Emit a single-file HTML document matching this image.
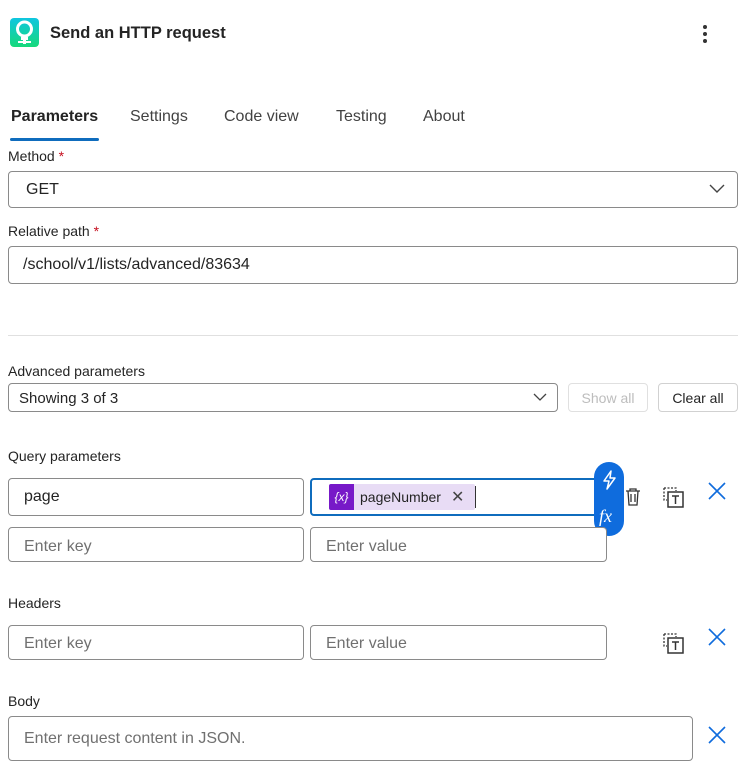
<!DOCTYPE html>
<html><head><style>
*{box-sizing:border-box;margin:0;padding:0}
body{width:745px;height:751px;overflow:hidden;background:#fff;font-family:"Liberation Sans",sans-serif;color:#242424;position:relative}
.a{position:absolute}
.lbl{font-size:14px;color:#242424}
.req{color:#c50f1f}
.box{position:absolute;border:1px solid #8a8a8a;border-radius:4px;background:#fff;font-size:16px;padding-left:15px;display:flex;align-items:center}
.ph{color:#707070}
.tab{position:absolute;top:108px;font-size:16px;color:#424242}
.btn{position:absolute;border:1px solid #d1d1d1;border-radius:4px;font-size:14px;display:flex;align-items:center;justify-content:center}
</style></head><body>
<div class="a" style="left:10px;top:18px;width:29px;height:29px;border-radius:4px;background:linear-gradient(#0fc6e0,#16d97a)">
<svg width="29" height="29" viewBox="0 0 29 29"><circle cx="14.5" cy="11" r="7" fill="none" stroke="#fff" stroke-width="3"/><rect x="11" y="19" width="7" height="3" fill="#fff"/><rect x="13" y="18" width="3" height="8" fill="#fff"/><rect x="8" y="23" width="13" height="2" fill="#fff"/></svg></div>
<div class="a" style="left:50px;top:24px;font-size:16.5px;font-weight:bold;color:#242424">Send an HTTP request</div>
<div class="a" style="left:703px;top:25px;width:4px;font-size:0">
<div style="width:4px;height:4px;border-radius:2px;background:#333;margin-bottom:3px"></div><div style="width:4px;height:4px;border-radius:2px;background:#333;margin-bottom:3px"></div><div style="width:4px;height:4px;border-radius:2px;background:#333"></div></div>
<div class="tab" style="left:11px;color:#242424;font-weight:bold">Parameters</div>
<div class="a" style="left:10px;top:138px;width:89px;height:3px;border-radius:2px;background:#0f6cbd"></div>
<div class="tab" style="left:130px">Settings</div>
<div class="tab" style="left:224px">Code view</div>
<div class="tab" style="left:336px">Testing</div>
<div class="tab" style="left:423px">About</div>
<div class="a lbl" style="left:8px;top:148px">Method <span class="req">*</span></div>
<div class="box" style="left:8px;top:171px;width:730px;height:37px;padding-left:17px">GET</div>
<svg class="a" style="left:709px;top:184px" width="16" height="10"><path d="M1 1l7 7 7-7" fill="none" stroke="#444" stroke-width="1.4"/></svg>
<div class="a lbl" style="left:8px;top:223px">Relative path <span class="req">*</span></div>
<div class="box" style="left:8px;top:246px;width:730px;height:38px;padding-left:14px">/school/v1/lists/advanced/83634</div>
<div class="a" style="left:8px;top:335px;width:730px;height:1px;background:#e0e0e0"></div>
<div class="a lbl" style="left:8px;top:363px">Advanced parameters</div>
<div class="box" style="left:8px;top:383px;width:550px;height:29px;font-size:15px;padding-left:10px;padding-top:2px">Showing 3 of 3</div>
<svg class="a" style="left:533px;top:393px" width="14" height="9"><path d="M1 1l6 6 6-6" fill="none" stroke="#444" stroke-width="1.3"/></svg>
<div class="btn" style="left:568px;top:383px;width:80px;height:29px;color:#bdbdbd;border-color:#e0e0e0">Show all</div>
<div class="btn" style="left:658px;top:383px;width:80px;height:29px;color:#242424">Clear all</div>
<div class="a lbl" style="left:8px;top:448px">Query parameters</div>
<div class="box" style="left:8px;top:478px;width:296px;height:38px">page</div>
<div class="a" style="left:310px;top:478px;width:290px;height:38px;border:2px solid #0f6cbd;border-radius:4px"></div>
<div class="a" style="left:329px;top:484px;width:146px;height:26px;background:#e8dcf5;border-radius:2px;display:flex;align-items:center;font-size:14px">
<div style="width:25px;height:26px;background:#7719c8;color:#fff;font-size:12px;display:flex;align-items:center;justify-content:center;font-style:italic;border-radius:2px 0 0 2px">{x}</div>
<span style="margin-left:6px">pageNumber</span><span style="margin-left:10px;font-size:16px;color:#444">✕</span></div>
<div class="a" style="left:475px;top:486px;width:1px;height:22px;background:#333"></div>
<div class="a" style="left:594px;top:462px;width:30px;height:74px;border-radius:15px;background:#0f6cdd;color:#fff">
<svg class="a" style="left:6px;top:8px" width="18" height="20"><path d="M11 1L4 11h5l-2 8 8-11h-5z" fill="none" stroke="#fff" stroke-width="1.5" stroke-linejoin="round"/></svg>
<div class="a" style="left:5px;top:44px;font-family:'Liberation Serif',serif;font-style:italic;font-size:18px">fx</div></div>
<svg class="a" style="left:624px;top:487px" width="18" height="20"><path d="M2 4h14M6 4V2h6v2M4 4l1 14h8l1-14M7 7v8M11 7v8" fill="none" stroke="#333" stroke-width="1.3"/></svg>
<svg class="a" style="left:663px;top:487px" width="22" height="22"><path d="M1 1h12v3M1 1v12h3" fill="none" stroke="#333" stroke-width="1.3" stroke-dasharray="2 1.5"/><rect x="5" y="5" width="15" height="15" fill="none" stroke="#333" stroke-width="1.5"/><path d="M9 9h7M12.5 9v8" stroke="#333" stroke-width="1.5"/></svg>
<svg class="a" style="left:708px;top:482px" width="18" height="18"><path d="M1 1l16 16M17 1L1 17" stroke="#0f6cdd" stroke-width="1.6"/></svg>
<div class="box ph" style="left:8px;top:527px;width:296px;height:35px;padding-top:4px">Enter key</div>
<div class="box ph" style="left:310px;top:527px;width:297px;height:35px;padding-top:4px">Enter value</div>
<div class="a lbl" style="left:8px;top:595px">Headers</div>
<div class="box ph" style="left:8px;top:625px;width:296px;height:35px;padding-top:3px">Enter key</div>
<div class="box ph" style="left:310px;top:625px;width:297px;height:35px;padding-top:3px">Enter value</div>
<svg class="a" style="left:663px;top:633px" width="22" height="22"><path d="M1 1h12v3M1 1v12h3" fill="none" stroke="#333" stroke-width="1.3" stroke-dasharray="2 1.5"/><rect x="5" y="5" width="15" height="15" fill="none" stroke="#333" stroke-width="1.5"/><path d="M9 9h7M12.5 9v8" stroke="#333" stroke-width="1.5"/></svg>
<svg class="a" style="left:708px;top:628px" width="18" height="18"><path d="M1 1l16 16M17 1L1 17" stroke="#0f6cdd" stroke-width="1.6"/></svg>
<div class="a lbl" style="left:8px;top:693px">Body</div>
<div class="box ph" style="left:8px;top:716px;width:685px;height:45px;align-items:flex-start;padding-top:13px">Enter request content in JSON.</div>
<svg class="a" style="left:708px;top:726px" width="18" height="18"><path d="M1 1l16 16M17 1L1 17" stroke="#0f6cdd" stroke-width="1.6"/></svg>
</body></html>
